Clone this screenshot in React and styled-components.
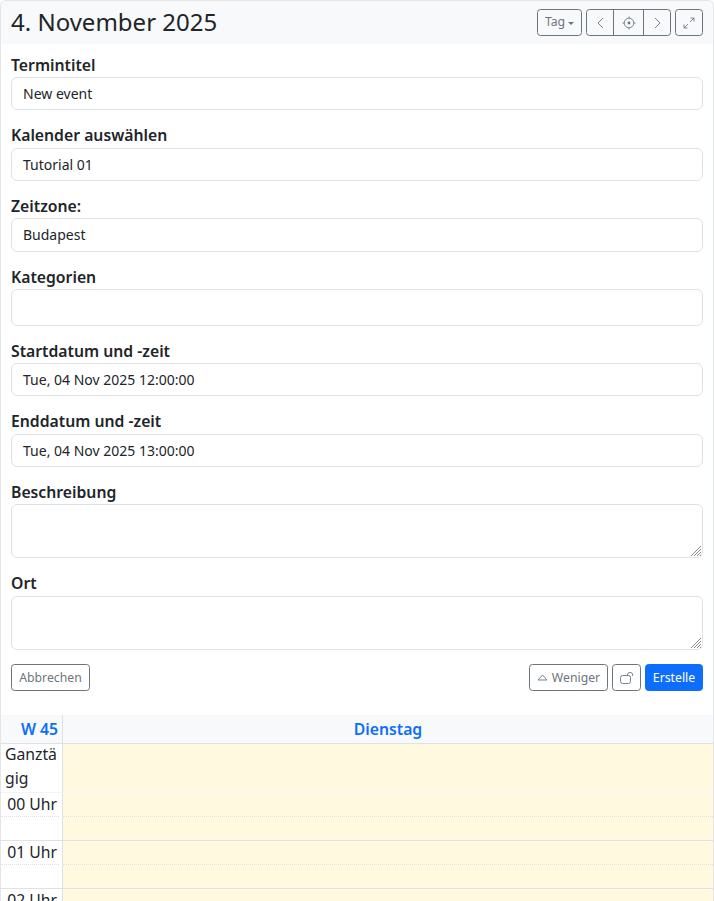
import React from "react";
import styled, { createGlobalStyle } from "styled-components";

const Global = createGlobalStyle`
  html, body { margin: 0; padding: 0; background: #fff; }
  body { font-family: "Noto Sans", "Liberation Sans", sans-serif; color: #212529; overflow: hidden; }
  * { box-sizing: border-box; }
`;
const Page = styled.div`
  width: 714px; height: 901px; overflow: hidden;
  border: 1px solid #e3e5e8; border-bottom: 0; border-radius: 6px 6px 0 0;
`;
const Header = styled.header`
  height: 43px; background: #f8f9fa; display: flex; align-items: center; justify-content: space-between;
  padding: 0 10px;
`;
const Title = styled.h1`
  margin: 0; font-size: 24px; font-weight: 400; line-height: 1.2; color: #212529;
`;
const Tools = styled.div`display: flex; gap: 4px; align-items: center;`;
const Btn = styled.div`
  display: flex; align-items: center; justify-content: center; gap: ${p => p.$gap || 0}px;
  height: 27.375px; width: ${p => p.$w}px;
  border: 1px solid #6c757d; border-radius: 3.5px; color: #6c757d; font-size: 12.25px; line-height: 1;
`;
const Group = styled.div`display: flex;`;
const GroupBtn = styled(Btn)`
  border-radius: 0; margin-left: -1px;
  &:first-child { border-radius: 3.5px 0 0 3.5px; margin-left: 0; }
  &:last-child { border-radius: 0 3.5px 3.5px 0; }
`;
const Caret = styled.span`
  width: 0; height: 0; border-left: 3px solid transparent; border-right: 3px solid transparent;
  border-top: 3px solid #6c757d; margin-top: 1px;
`;
const Form = styled.div`padding: 9.3px 10px 0; display: flex; flex-direction: column;`;
const Field = styled.div`margin-bottom: 13.625px; display: flex; flex-direction: column;`;
const Label = styled.label`
  display: block; height: 23.625px; padding-top: 0.4px; font-size: 15.75px; font-weight: 600; line-height: 23.2px; color: #212529;
`;
const Input = styled.div`
  height: ${p => p.$h || 33.5}px; border: 1px solid #dee2e6; border-radius: 6px; background: #fff;
  font-size: 14px; line-height: 21px; padding: 5px 11px; color: #212529; position: relative;
`;
const Grip = styled.svg`position: absolute; right: 0; bottom: 0; width: 12px; height: 12px;`;
const Actions = styled.div`display: flex; justify-content: space-between; margin-top: 0.7px;`;
const Right = styled.div`display: flex; gap: 4px;`;
const Primary = styled(Btn)`background: #0d6efd; border-color: #0d6efd; color: #fff;`;
const Calendar = styled.div`margin-top: 23.6px; display: grid; grid-template-columns: 62px 1fr;`;
const Week = styled.div`
  height: 29px; background: #f8f9fa; color: #0d6efd; font-weight: 600; font-size: 15.75px; line-height: 28px;
  text-align: right; padding-right: 4px; border-right: 1px solid #dee2e6; border-bottom: 1px solid #dee2e6;
`;
const Day = styled.div`
  height: 29px; background: #f8f9fa; color: #0d6efd; font-weight: 600; font-size: 15.75px; line-height: 28px;
  text-align: center; border-bottom: 1px solid #dee2e6;
`;
const AllDayLabel = styled.div`
  height: 51px; margin-top: -2px; font-size: 15.75px; line-height: 24px; padding: 0 4px; word-break: break-all;
  border-right: 1px solid #dee2e6; border-bottom: 1px solid #f1f3f5;
`;
const AllDayCell = styled.div`height: 49px; background: #fff9df; border-bottom: 1px solid #f8f9fa;`;
const TimeCell = styled.div`
  position: relative;
  height: 24px; font-size: 15.75px; line-height: 23px; text-align: right; padding-right: 5px;
  border-right: 1px solid #dee2e6; white-space: nowrap;
  border-bottom: 1px solid ${p => p.$half ? "transparent" : "#dee2e6"};
  ${p => p.$half && `&::after {
    content: ""; position: absolute; left: 0; right: 3px; bottom: -1px; border-bottom: 1px dotted #dee2e6;
  }`}
`;
const SlotCell = styled.div`
  height: 24px; background: #fff9df;
  border-bottom: 1px ${p => p.$half ? "dotted" : "solid"} #dee2e6;
`;

const Chevron = ({ d }) => (
  <svg width="7" height="12" viewBox="0 0 7 12" fill="none" stroke="#6c757d" strokeWidth="0.9"><path d={d} /></svg>
);
const fields = [
  ["Termintitel", "New event"],
  ["Kalender auswählen", "Tutorial 01"],
  ["Zeitzone:", "Budapest"],
  ["Kategorien", "", 36.5],
  ["Startdatum und -zeit", "Tue, 04 Nov 2025 12:00:00"],
  ["Enddatum und -zeit", "Tue, 04 Nov 2025 13:00:00"],
  ["Beschreibung", "", 54, true],
  ["Ort", "", 54, true],
];

export default function App() {
  return (
    <Page>
      <Global />
      <Header>
        <Title>4. November 2025</Title>
        <Tools>
          <Btn $w={45} $gap={3}>Tag <Caret /></Btn>
          <Group>
            <GroupBtn $w={28}><Chevron d="M6 1 1 6l5 5" /></GroupBtn>
            <GroupBtn $w={31}>
              <svg width="14" height="14" viewBox="0 0 14 14" fill="none" stroke="#6c757d" strokeWidth="0.9">
                <circle cx="7" cy="7" r="4.8" /><circle cx="7" cy="7" r="1.4" fill="#6c757d" stroke="none" />
                <path d="M7 .5v1.7M7 11.8v1.7M.5 7h1.7M11.8 7h1.7" />
              </svg>
            </GroupBtn>
            <GroupBtn $w={28}><Chevron d="m1 1 5 5-5 5" /></GroupBtn>
          </Group>
          <Btn $w={28}>
            <svg width="12" height="12" viewBox="0 0 12 12" fill="none" stroke="#6c757d" strokeWidth="0.85">
              <path d="M1 11 5 7M1 7.5V11h3.5M11 1 7 5M7.5 1H11v3.5" />
            </svg>
          </Btn>
        </Tools>
      </Header>
      <Form>
        {fields.map(([label, value, h, area]) => (
          <Field key={label}>
            <Label>{label}</Label>
            <Input $h={h}>
              {value}
              {area && (
                <Grip viewBox="0 0 12 12" stroke="#8a8a8a" strokeWidth="1">
                  <path d="M11 1 1 11M11 4 4 11M11 7 7 11M11 10 10 11" />
                </Grip>
              )}
            </Input>
          </Field>
        ))}
        <Actions>
          <Btn $w={79}>Abbrechen</Btn>
          <Right>
            <Btn $w={79} $gap={4}>
              <svg width="11" height="7" viewBox="0 0 11 7" fill="none" stroke="#6c757d" strokeWidth="0.9">
                <path d="M5.5 1 10 6H1Z" />
              </svg>
              Weniger
            </Btn>
            <Btn $w={29}>
              <svg width="14" height="12" viewBox="0 0 14 12" fill="none" stroke="#6c757d" strokeWidth="0.9">
                <rect x="0.5" y="3.5" width="10" height="8" rx="2" />
                <path d="M7.5 3.5V3a2.6 2.6 0 0 1 5.2 0v1" />
              </svg>
            </Btn>
            <Primary $w={58}>Erstelle</Primary>
          </Right>
        </Actions>
      </Form>
      <Calendar>
        <Week>W 45</Week>
        <Day>Dienstag</Day>
        <AllDayLabel>Ganztägig</AllDayLabel>
        <AllDayCell />
        {["00 Uhr", "01 Uhr", "02 Uhr"].map(t => (
          <React.Fragment key={t}>
            <TimeCell $half>{t}</TimeCell>
            <SlotCell $half />
            <TimeCell />
            <SlotCell />
          </React.Fragment>
        ))}
      </Calendar>
    </Page>
  );
}
